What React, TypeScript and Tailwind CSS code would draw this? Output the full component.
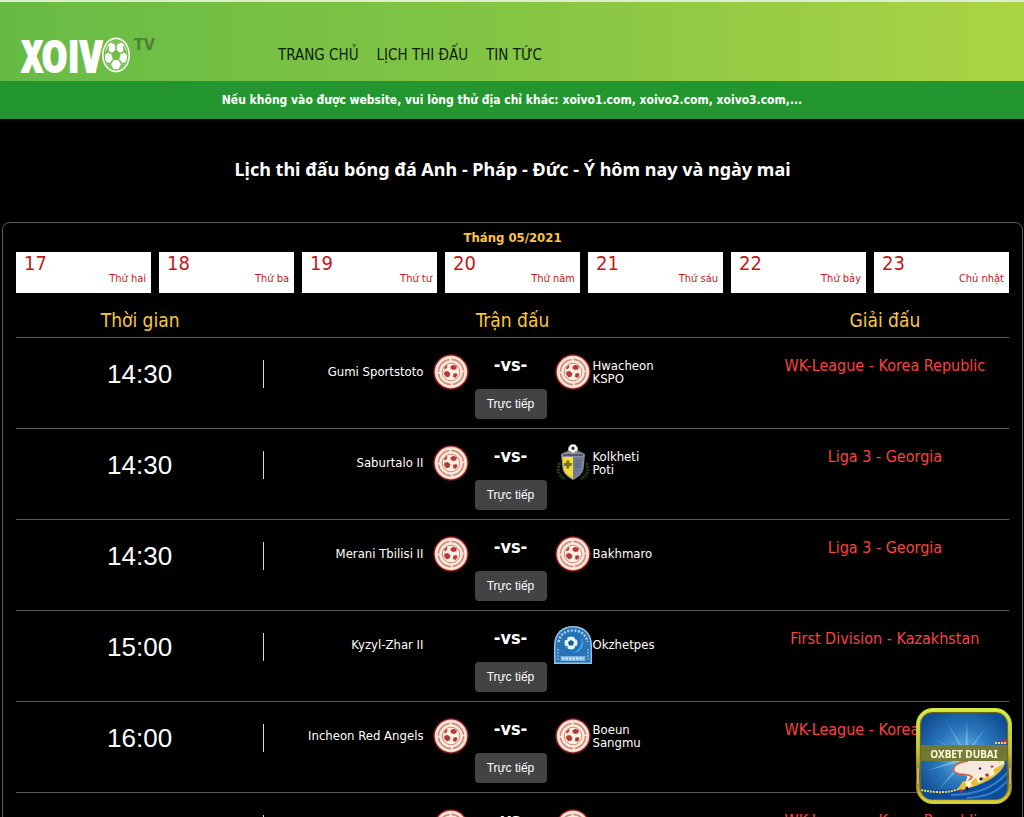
import React from 'react';

type CrestKind = 'red' | 'shield' | 'blue' | 'none';

interface Match {
  time: string;
  home: string;
  homeCrest: CrestKind;
  away: string;
  awayCrest: CrestKind;
  league: string;
}

const navItems = ['TRANG CHỦ', 'LỊCH THI ĐẤU', 'TIN TỨC'];

const days = [
  { date: '17', name: 'Thứ hai' },
  { date: '18', name: 'Thứ ba' },
  { date: '19', name: 'Thứ tư' },
  { date: '20', name: 'Thứ năm' },
  { date: '21', name: 'Thứ sáu' },
  { date: '22', name: 'Thứ bảy' },
  { date: '23', name: 'Chủ nhật' },
];

const matches: Match[] = [
  { time: '14:30', home: 'Gumi Sportstoto', homeCrest: 'red', away: 'Hwacheon KSPO', awayCrest: 'red', league: 'WK-League - Korea Republic' },
  { time: '14:30', home: 'Saburtalo II', homeCrest: 'red', away: 'Kolkheti Poti', awayCrest: 'shield', league: 'Liga 3 - Georgia' },
  { time: '14:30', home: 'Merani Tbilisi II', homeCrest: 'red', away: 'Bakhmaro', awayCrest: 'red', league: 'Liga 3 - Georgia' },
  { time: '15:00', home: 'Kyzyl-Zhar II', homeCrest: 'none', away: 'Okzhetpes', awayCrest: 'blue', league: 'First Division - Kazakhstan' },
  { time: '16:00', home: 'Incheon Red Angels', homeCrest: 'red', away: 'Boeun Sangmu', awayCrest: 'red', league: 'WK-League - Korea Republic' },
  { time: '16:00', home: 'Suwon UDC', homeCrest: 'red', away: 'Seoul', awayCrest: 'red', league: 'WK-League - Korea Republic' },
];

function LogoBall() {
  return (
    <svg viewBox="0 0 28 36" className="h-9 w-7" aria-hidden="true">
      <ellipse cx="14" cy="18" rx="14" ry="17.500" fill="#fff" />
      <ellipse cx="14" cy="18" rx="11.800" ry="15" fill="none" stroke="#6fbe45" strokeWidth="1.300" />
      <path d="M14 12.500l4.800 4-1.800 6.500h-6l-1.800-6.500z" fill="#6fbe45" />
      <g fill="none" stroke="#6fbe45" strokeWidth="1.500">
        <path d="M14 7v6M5.500 14.500l4 2M22.500 14.500l-4 2M8 27l3-4M20 27l-3-4" />
        <path d="M9 4.500L14 7.500l5-3M2.500 17l3-2.500L6.500 9M25.500 17l-3-2.500-1-5.500M4 26l4 1 2.500 5M24 26l-4 1-2.500 5" />
      </g>
      <g fill="#6fbe45">
        <path d="M10.500 4L14 6.500 17.500 4 14 3zM3 18l2.500-2.500L6 11l-2 2zM25 18l-2.500-2.500L22 11l2 2zM5 27l2.500 1 1.500 3-2-1zM23 27l-2.500 1-1.500 3 2-1z" />
      </g>
    </svg>
  );
}

function RedCrest() {
  return (
    <svg viewBox="0 0 36 36" className="size-9" aria-hidden="true">
      <circle cx="18" cy="18" r="17.800" fill="#7c1214" />
      <circle cx="18" cy="18" r="16.400" fill="#f3b8ac" />
      <circle cx="18" cy="18" r="15.500" fill="#fbe9da" />
      <circle cx="18" cy="18" r="12.600" fill="none" stroke="#cd8d84" strokeWidth="1.600" strokeDasharray="18 1.800" />
      <circle cx="18" cy="18" r="8.800" fill="#fdf0e2" stroke="#d4877d" strokeWidth="1" />
      <g fill="#b53a37">
        <path d="M17.500 12.200l3-1.400 3.300 1.400-.5 3-3 .8-2.600-1.300z" />
        <path d="M11.300 17.800l3.400-.8 2.700 2.300-.8 3.300-3.200.6-2.200-2.600z" />
        <path d="M20.300 19.800l3-.8 1.200 2-1.700 2.800-2.700-.5z" />
        <path d="M11 14l2.300-2.700 1.300.3-.8 2.400-2 1.400z" />
      </g>
    </svg>
  );
}

function ShieldCrest() {
  return (
    <svg viewBox="0 0 36 40" className="h-10 w-9" aria-hidden="true">
      <path d="M5 20c-4 7-1 13 5 16M31 20c4 7 1 13-5 16" fill="none" stroke="#203f1d" strokeWidth="3" strokeDasharray="2 1" />
      <path d="M9 10c3-4 15-4 18 0z" fill="#6b6d65" />
      <circle cx="18" cy="6" r="4.800" fill="#f4f4f2" />
      <path d="M16.300 4.800l1.700-1.200 1.700 1.200-.6 2h-2.200zM13.500 3l1.500-1-.5 2zM22.500 3l-1.500-1 .5 2zM14 8.500h2l-.5 1.500zM22 8.500h-2l.5 1.500z" fill="#222" />
      <path d="M6 11l3-1.500h18l3 1.500-1.500 15c-1 5-6 8.500-10.500 11-4.500-2.500-9.500-6-10.500-11z" fill="#8990a5" />
      <path d="M7.500 14H18v21.500c-4-2-8.300-5-9.200-9.500z" fill="#f3e02d" />
      <path d="M18 14h10.500l-1.300 12c-.9 4.500-5.200 7.500-9.200 9.500z" fill="#707a94" />
      <path d="M11.300 17.500h3v2.500h2.500v3h-2.500v2.500h-3v-2.500H9V20h2.300z" fill="#776d35" />
      <path d="M20 18h6M20 21h6M20 24h5" stroke="#555f78" strokeWidth="1.200" />
      <path d="M8 12h20" stroke="#44495b" strokeWidth="1.500" />
    </svg>
  );
}

function BlueCrest() {
  return (
    <svg viewBox="0 0 40 40" className="size-10" aria-hidden="true">
      <path d="M1 39V20C1 8 9 1 20 1s19 7 19 19v19z" fill="#8fc0e6" />
      <path d="M2.500 37.500V20C2.500 9 10 2.500 20 2.500S37.500 9 37.500 20v17.500z" fill="#2a72b4" />
      <path d="M5.500 17C7 9 13 5.500 20 5.500S33 9 34.500 17" fill="none" stroke="#a9d0ec" strokeWidth="2.500" strokeDasharray="2 1.600" />
      <circle cx="20" cy="19" r="10.500" fill="#1b72bd" />
      <path d="M28 12c5 7 1 16-9 16 7-2 11-8 9-16z" fill="#4aa0dc" />
      <circle cx="18" cy="18" r="6.500" fill="#e8f5fb" />
      <path d="M18 15l3 2-1 3.500h-4L15 17zM12 15l2-2 .5 2zM22 12l2 2-2 .5zM12.500 21l2.500.5-1 2zM21.500 21.500l2.500-.5-1.500 2.500z" fill="#1b5d9c" />
      <path d="M7.500 31h25v5h-25z" fill="#76b2de" />
      <path d="M9 33.500h22" stroke="#c5e0f4" strokeWidth="2.500" strokeDasharray="2.500 1" />
      <path d="M5 24v11M35 24v11" stroke="#76b2de" strokeWidth="1.500" strokeDasharray="2 1" />
    </svg>
  );
}

function Crest({ kind }: { kind: CrestKind }) {
  return (
    <div className="flex h-9 items-center justify-center">
      {kind === 'red' && <RedCrest />}
      {kind === 'shield' && <ShieldCrest />}
      {kind === 'blue' && <BlueCrest />}
    </div>
  );
}

function MatchRow({ match }: { match: Match }) {
  return (
    <tr className="border-b border-[#5c5c5c] align-top">
      <td className="pt-[22px]">
        <div className="flex items-center">
          <span className="flex-1 text-center font-['Liberation_Sans',sans-serif] text-[26px] leading-7 text-white">{match.time}</span>
          <span className="h-7 w-px bg-[#d8d8d8]" />
        </div>
      </td>
      <td className="pt-4 pb-[9px]">
        <div className="grid grid-cols-[1fr_36px_84px_40px_1fr] text-[13px] leading-[13px] text-white">
          <div className="flex h-9 items-center justify-end pr-[9px] text-right">{match.home}</div>
          <Crest kind={match.homeCrest} />
          <div className="flex flex-col items-center gap-[13px]">
            <span className="text-lg leading-[22px] font-bold">-vs-</span>
            <button type="button" className="h-[30px] w-[72px] rounded bg-[#434343] font-['Liberation_Sans',sans-serif] text-xs text-white">
              Trực tiếp
            </button>
          </div>
          <Crest kind={match.awayCrest} />
          <div className="flex h-9 max-w-[68px] items-center">{match.away}</div>
        </div>
      </td>
      <td className="pt-4 text-center text-base leading-6 text-[#f94441]">{match.league}</td>
    </tr>
  );
}

function PromoBadge() {
  return (
    <a href="#oxbet" aria-label="OXBET DUBAI" className="fixed right-[11px] bottom-3 flex size-[98px] items-center justify-center">
      <svg viewBox="0 0 98 98" className="absolute inset-0 size-full" aria-hidden="true">
        <defs>
          <linearGradient id="rim" x1="0" y1="0" x2="0" y2="1">
            <stop offset="0" stopColor="#d3e83e" />
            <stop offset=".45" stopColor="#b9b42a" />
            <stop offset=".72" stopColor="#7a5a18" />
            <stop offset=".85" stopColor="#a58c1c" />
            <stop offset="1" stopColor="#d2cf2b" />
          </linearGradient>
          <radialGradient id="sky" cx=".5" cy=".5" r=".7">
            <stop offset="0" stopColor="#6fbdea" />
            <stop offset=".45" stopColor="#2a78bd" />
            <stop offset="1" stopColor="#0b3f86" />
          </radialGradient>
          <clipPath id="face">
            <rect x="6" y="6" width="86" height="86" rx="11" />
          </clipPath>
        </defs>
        <rect x="1" y="1" width="96" height="96" rx="17" fill="url(#rim)" />
        <rect x="3" y="3" width="92" height="92" rx="15" fill="none" stroke="#eaf763" strokeOpacity=".35" strokeWidth="1.500" />
        <rect x="5.500" y="5.500" width="87" height="87" rx="11.500" fill="none" stroke="#6b6a16" />
        <g clipPath="url(#face)">
          <rect x="6" y="6" width="86" height="86" fill="url(#sky)" />
          <g fill="#bfe6ff" opacity=".4">
            <path d="M49 46L31 14l20 31zM50 46l2-34 1 34zM51 46l20-26-18 27zM49 47L16 30l32 18z" />
            <path d="M49 50l-38 14 38-10zM50 50L24 82l28-28z" />
          </g>
          <path d="M92 56C80 76 60 82 6 84v8h86z" fill="#0c4c9c" />
          <path d="M92 66C78 82 60 88 36 88M92 74C82 86 70 90 52 91" fill="none" stroke="#2f7fc8" strokeWidth="2" />
          <path d="M53 54h36c3 8-16 22-42 29l5-12c3-4-15-4-13-9 2-4 6-7 14-8z" fill="#f6e8df" />
          <path d="M53 54c-10 1-16 5-14 10s15 2 18 6l-12 13" fill="none" stroke="#c96a50" strokeWidth="1.800" />
          <path d="M42 83l6-9 8 1 7-6 8 2 8-9 11-6c-4 14-28 25-48 27z" fill="#e3bd3b" />
          <g fill="#fff4c9">
            <path d="M50 75l5-2 2 6-5 2zM61 70l5-2 2 6-5 2zM73 65l5-3 2 5-5 3z" />
          </g>
          <g fill="#1d2230">
            <path d="M52 79l2 3-2 2-2-2zM66 70l2 2-2 2-2-2zM65 60l1.500 1.500L65 63l-1.500-1.500z" />
          </g>
          <g fill="#d2232a">
            <path d="M46 82l2 2-2 2-2-2zM72 66l2 2-2 2-2-2zM77 58l1.500 1.500L77 61l-1.500-1.500zM88 32h4v5h-4z" />
          </g>
          <path d="M6 83c15 3 27 3 38-1M80 36h12M84 56l8-6" fill="none" stroke="#f2d56b" strokeWidth="2" strokeDasharray="2 1" />
          <rect x="6" y="38" width="86" height="16" fill="#76792b" fillOpacity=".92" />
        </g>
        <path d="M3 62v14M95 62v14" stroke="#c9b27a" strokeWidth="2" strokeLinecap="round" />
      </svg>
      <span className="relative pb-1 font-['Noto_Sans',sans-serif] text-[10px] leading-4 font-bold whitespace-nowrap text-[#ffffda]">OXBET DUBAI</span>
    </a>
  );
}

export default function App() {
  return (
    <div className="min-h-screen bg-black font-['DejaVu_Sans_Condensed','Noto_Sans',sans-serif] text-white">
      <header className="flex h-[81px] items-end border-t-2 border-[#d9efcf] bg-linear-to-r from-[#66bb45] via-[#84c544] to-[#abd445]">
        <a href="#home" aria-label="XOIVO TV" className="flex w-[270px] items-start pb-1.5 pl-[22px]">
          <span className="font-['Open_Sans_Condensed','Roboto_Condensed','Noto_Sans_Condensed','Liberation_Sans',sans-serif] text-[43px] leading-[38px] font-bold text-white [-webkit-text-stroke:2px_white]">XOIV</span>
          <LogoBall />
          <span className="pl-1 font-['DejaVu_Sans_Condensed',sans-serif] text-base leading-4 font-bold text-[#4c8235]">TV</span>
        </a>
        <nav className="flex gap-[18px] pb-4 pl-2 text-[15px] leading-5 text-[#10200a]">
          {navItems.map((item) => (
            <a key={item} href="#nav">{item}</a>
          ))}
        </nav>
      </header>

      <p className="bg-[#249630] py-[9px] text-center text-xs leading-5 font-bold text-white">
        Nếu không vào được website, vui lòng thử địa chỉ khác: xoivo1.com, xoivo2.com, xoivo3.com,...
      </p>

      <main className="pr-px pl-0.5">
        <h1 className="pt-[38px] pb-[41px] text-center font-['Noto_Sans',sans-serif] text-lg leading-6 font-bold">
          Lịch thi đấu bóng đá Anh - Pháp - Đức - Ý hôm nay và ngày mai
        </h1>

        <section className="rounded-lg border border-[#5c5c5c] px-[13px] pt-[5px]">
          <h2 className="text-center text-[13px] leading-5 font-bold text-[#fbc346]">Tháng 05/2021</h2>
          <div className="mt-1 grid grid-cols-7 gap-2">
            {days.map((day) => (
              <button key={day.date} type="button" className="flex h-[41px] flex-col bg-white pr-[5px] pl-2 text-[#c4161c]">
                <span className="text-left text-xl leading-[22px]">{day.date}</span>
                <span className="self-end text-[11px] leading-[10px]">{day.name}</span>
              </button>
            ))}
          </div>

          <table className="w-full table-fixed border-collapse">
            <thead>
              <tr className="h-11 border-b border-[#5c5c5c] text-[19px] leading-7 text-[#fcc83c]">
                <th className="w-1/4 pt-2.5 font-normal">Thời gian</th>
                <th className="w-1/2 pt-2.5 font-normal">Trận đấu</th>
                <th className="w-1/4 pt-2.5 font-normal">Giải đấu</th>
              </tr>
            </thead>
            <tbody>
              {matches.map((match, index) => (
                <MatchRow key={index} match={match} />
              ))}
            </tbody>
          </table>
        </section>
      </main>

      <PromoBadge />
    </div>
  );
}
